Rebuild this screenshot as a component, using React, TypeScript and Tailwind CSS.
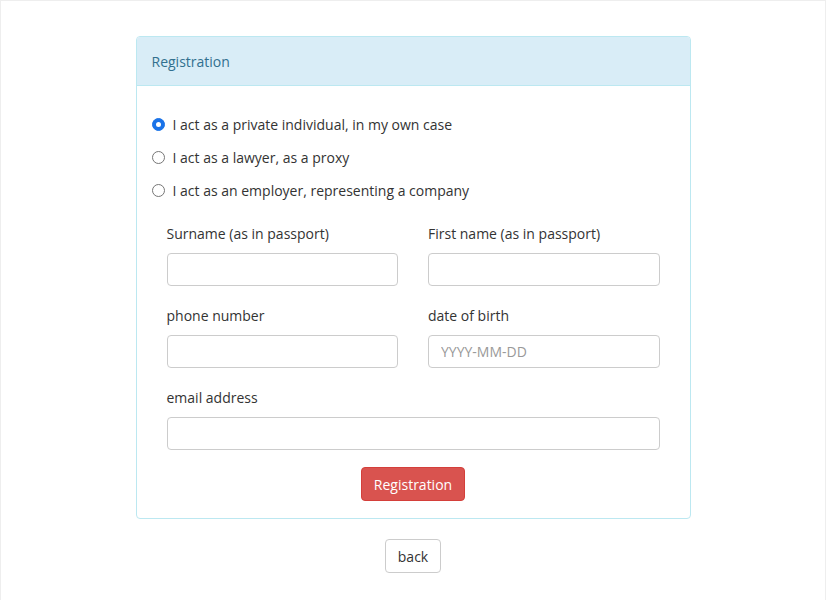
import { useState } from "react";

const options = [
  "I act as a private individual, in my own case",
  "I act as a lawyer, as a proxy",
  "I act as an employer, representing a company",
];

function Field({ label, placeholder }: { label: string; placeholder?: string }) {
  return (
    <div className="flex flex-col">
      <label className="h-[20px] leading-[20px] mb-[9px]">{label}</label>
      <input
        placeholder={placeholder}
        className="h-[33px] w-full rounded-[4px] border border-[#cccccc] bg-white px-3 text-[14px] text-[#555] placeholder:text-[#999] outline-none"
      />
    </div>
  );
}

export default function App() {
  const [role, setRole] = useState(0);
  return (
    <div
      className="min-h-[600px] border-l border-t border-r border-[#eeeeee] bg-white text-[14px] text-[#333333] pt-[35px]"
      style={{ fontFamily: '"Open Sans", "Liberation Sans", sans-serif' }}
    >
      <div className="mx-auto w-[555px] rounded-[4px] border border-[#bce8f1]">
        <div className="h-[49px] flex items-center px-[15px] bg-[#d9edf7] border-b border-[#bce8f1] text-[#31708f] rounded-t-[3px]">
          Registration
        </div>
        <div className="px-[15px] pt-[28px] pb-[17px]">
          <div className="flex flex-col gap-[13px]">
            {options.map((o, i) => (
              <label key={o} className="flex items-center h-[20px] cursor-pointer" onClick={() => setRole(i)}>
                <span
                  className={
                    role === i
                      ? "w-[13px] h-[13px] rounded-full bg-[#1a73e8] border border-[#1a73e8] flex items-center justify-center mr-[8px]"
                      : "w-[13px] h-[13px] rounded-full bg-white border border-[#767676] mr-[8px]"
                  }
                >
                  {role === i && <span className="w-[5px] h-[5px] rounded-full bg-white" />}
                </span>
                <span>{o}</span>
              </label>
            ))}
          </div>
          <div className="px-[15px] mt-[24px]">
            <div className="grid grid-cols-2 gap-x-[30px] gap-y-[20px]">
              <Field label="Surname (as in passport)" />
              <Field label="First name (as in passport)" />
              <Field label="phone number" />
              <Field label="date of birth" placeholder="YYYY-MM-DD" />
              <div className="col-span-2">
                <Field label="email address" />
              </div>
            </div>
            <div className="flex justify-center mt-[17px]">
              <button className="h-[34px] px-[12px] rounded-[4px] bg-[#d9534f] border border-[#d43f3a] text-white">
                Registration
              </button>
            </div>
          </div>
        </div>
      </div>
      <div className="flex justify-center mt-[20px]">
        <button className="h-[34px] px-[12px] rounded-[4px] bg-white border border-[#cccccc] text-[#333]">
          back
        </button>
      </div>
    </div>
  );
}
